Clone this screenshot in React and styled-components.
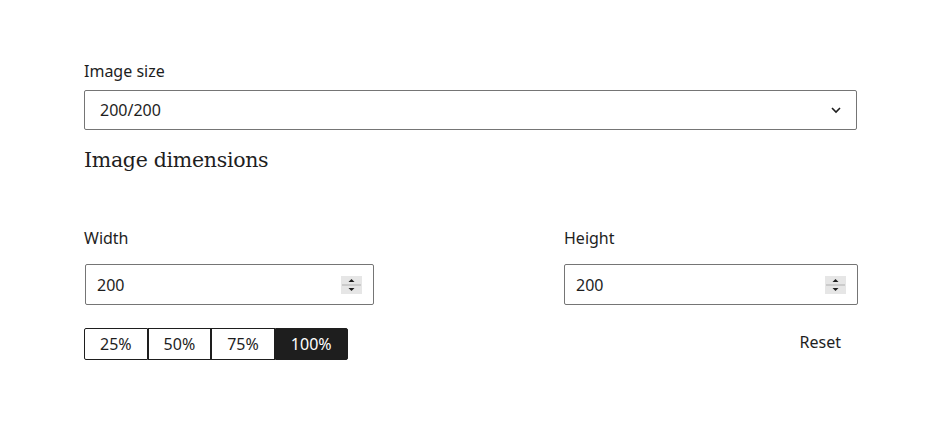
import styled, { createGlobalStyle } from 'styled-components';

const GlobalStyle = createGlobalStyle`
    body {
        margin: 0;
        background: #fff;
        font-family: 'Noto Sans', 'Open Sans', sans-serif;
        color: #1e1e1e;
    }
`;

export default function App() {
    return (
        <Page>
            <GlobalStyle />
            <Field>
                <Label>Image size</Label>
                <Select>
                    200/200
                    <svg width="12" height="8" viewBox="0 0 12 8">
                        <path d="M2 2 L6 6 L10 2" fill="none" stroke="#1e1e1e" strokeWidth="1.6" />
                    </svg>
                </Select>
            </Field>
            <Heading>Image dimensions</Heading>
            <Dimensions>
                <Field>
                    <Label $gap={15}>Width</Label>
                    <NumberBox $width={289} $offset={1}>
                        200
                        <Spinner />
                    </NumberBox>
                </Field>
                <Field>
                    <Label $gap={15}>Height</Label>
                    <NumberBox $width={294}>
                        200
                        <Spinner />
                    </NumberBox>
                </Field>
            </Dimensions>
            <Footer>
                <Segments>
                    {['25%', '50%', '75%', '100%'].map((item) => (
                        <Segment key={item} $active={item === '100%'}>
                            {item}
                        </Segment>
                    ))}
                </Segments>
                <Reset>Reset</Reset>
            </Footer>
        </Page>
    );
}

function Spinner() {
    return (
        <SpinBox>
            <svg width="21" height="18" viewBox="0 0 21 18">
                <rect x="0" y="0" width="21" height="18" fill="#e6e6e6" />
                <rect x="1" y="8.5" width="19" height="1" fill="#b0b0b0" />
                <path d="M7.5 6 L10.5 3 L13.5 6 Z" fill="#1e1e1e" />
                <path d="M7.5 12 L10.5 15 L13.5 12 Z" fill="#1e1e1e" />
            </svg>
        </SpinBox>
    );
}

const Page = styled.div`
    width: 773px;
    padding: 60px 0 0 84px;
    display: flex;
    flex-direction: column;
`;

const Field = styled.div`
    display: flex;
    flex-direction: column;
`;

const Label = styled.div`
    font-size: 16px;
    line-height: 22px;
    margin-bottom: ${(p) => p.$gap ?? 8}px;
`;

const Select = styled.div`
    height: 40px;
    box-sizing: border-box;
    border: 1px solid #757575;
    border-radius: 2px;
    display: flex;
    align-items: center;
    justify-content: space-between;
    padding: 0 14px 0 15px;
    font-size: 16px;
`;

const Heading = styled.h2`
    margin: 16px 0 0;
    font-family: 'DejaVu Serif', 'Liberation Serif', serif;
    font-weight: 400;
    font-size: 20.5px;
    line-height: 28px;
    letter-spacing: -0.3px;
`;

const Dimensions = styled.div`
    display: grid;
    grid-template-columns: 480px 1fr;
    margin-top: 53px;
`;

const NumberBox = styled.div`
    width: ${(p) => p.$width}px;
    height: 41px;
    box-sizing: border-box;
    border: 1px solid #757575;
    border-radius: 2px;
    display: flex;
    align-items: center;
    justify-content: space-between;
    padding: 0 11px 0 11px;
    font-size: 16px;
    margin-left: ${(p) => p.$offset ?? 0}px;
`;

const SpinBox = styled.span`
    display: flex;
`;

const Footer = styled.div`
    display: flex;
    align-items: center;
    justify-content: space-between;
    margin-top: 23px;
    padding-right: 16px;
`;

const Segments = styled.div`
    display: flex;
`;

const Segment = styled.div`
    height: 32px;
    box-sizing: border-box;
    padding: 0 15px;
    display: flex;
    align-items: center;
    font-size: 16px;
    border: 1px solid #1e1e1e;
    background: ${(p) => (p.$active ? '#1e1e1e' : '#fff')};
    color: ${(p) => (p.$active ? '#fff' : '#1e1e1e')};
    &:first-child {
        border-radius: 2px 0 0 2px;
    }
    &:last-child {
        border-radius: 0 2px 2px 0;
    }
`;

const Reset = styled.div`
    font-size: 16px;
    margin-bottom: 5px;
`;
